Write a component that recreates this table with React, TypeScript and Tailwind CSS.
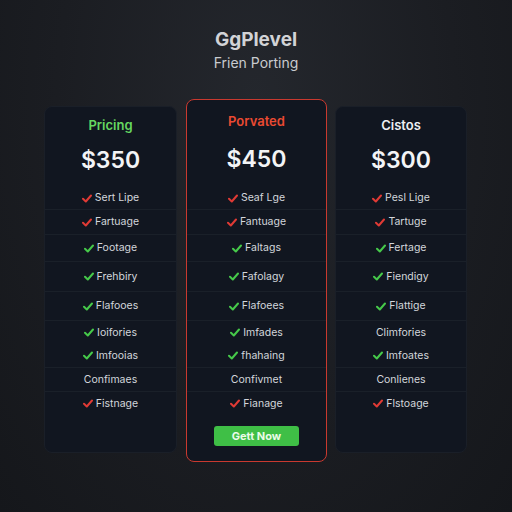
import React from "react";

type Row = { t: string; c: "r" | "g" | "n"; h: number; b: boolean };

const H = [22, 25, 27, 30, 29, 24, 23, 24, 24];
const B = [false, true, true, true, true, true, false, true, true];

const mk = (items: [string, "r" | "g" | "n"][]): Row[] =>
  items.map(([t, c], i) => ({ t, c, h: H[i], b: B[i] }));

const left = mk([
  ["Sert Lipe", "r"],
  ["Fartuage", "r"],
  ["Footage", "g"],
  ["Frehbiry", "g"],
  ["Flafooes", "g"],
  ["Ioifories", "g"],
  ["Imfooias", "g"],
  ["Confimaes", "n"],
  ["Fistnage", "r"],
]);
const mid = mk([
  ["Seaf Lge", "r"],
  ["Fantuage", "r"],
  ["Faltags", "g"],
  ["Fafolagy", "g"],
  ["Flafoees", "g"],
  ["Imfades", "g"],
  ["fhahaing", "g"],
  ["Confivmet", "n"],
  ["Fianage", "r"],
]);
const right = mk([
  ["Pesl Lige", "r"],
  ["Tartuge", "r"],
  ["Fertage", "g"],
  ["Fiendigy", "g"],
  ["Flattige", "g"],
  ["Climfories", "n"],
  ["Imfoates", "g"],
  ["Conlienes", "n"],
  ["Flstoage", "r"],
]);

function Check({ c }: { c: "r" | "g" }) {
  return (
    <svg width="10" height="9" viewBox="0 0 10 9" className="shrink-0">
      <polyline
        points="1,4.8 3.8,7.5 9,1.5"
        fill="none"
        stroke={c === "r" ? "#e03a35" : "#46c94a"}
        strokeWidth="2"
        strokeLinecap="round"
        strokeLinejoin="round"
      />
    </svg>
  );
}

function Rows({ rows, top }: { rows: Row[]; top: string }) {
  return (
    <div className={`flex flex-col ${top}`}>
      {rows.map((r, i) => (
        <div
          key={i}
          style={{ height: r.h }}
          className={`flex items-center justify-center gap-[3px] text-[10.5px] text-[#d3d6dc] ${
            r.b ? "border-t border-[#1a2029]" : ""
          }`}
        >
          {r.c !== "n" && <Check c={r.c} />}
          <span>{r.t}</span>
        </div>
      ))}
    </div>
  );
}

export default function App() {
  return (
    <div
      className="w-[512px] h-[512px] flex flex-col items-center bg-[radial-gradient(ellipse_at_50%_20%,#24272d_0%,#1b1d22_55%,#15171b_100%)]"
      style={{ fontFamily: "Inter, 'Open Sans', sans-serif" }}
    >
      <div className="mt-[29px] text-[19px] leading-[22px] font-bold text-[#d2d3d6]">GgPlevel</div>
      <div className="mt-[2px] text-[14px] leading-[20px] text-[#c9cbcf]">Frien Porting</div>
      <div className="mt-[26px] w-full px-[44px] flex items-start gap-[8px]">
        <div className="mt-[7px] w-[133px] h-[347px] rounded-[8px] bg-[#111620] border border-[#1a1f28] flex flex-col items-stretch">
          <div className="pt-[8px] text-center text-[13px] leading-[20px] font-semibold text-[#66d860]">Pricing</div>
          <div className="mt-[10px] text-center text-[23px] leading-[30px] font-semibold text-[#f3f4f6]">$350</div>
          <Rows rows={left} top="mt-[12px]" />
        </div>
        <div className="ml-[1px] w-[141px] h-[363px] rounded-[8px] bg-[#111620] border-[1.5px] border-[#c9392f] flex flex-col items-stretch">
          <div className="pt-[11px] text-center text-[13px] leading-[20px] font-semibold text-[#ea4a32]">Porvated</div>
          <div className="mt-[13px] text-center text-[23px] leading-[30px] font-semibold text-[#f3f4f6]">$450</div>
          <Rows rows={mid} top="mt-[13px]" />
          <div className="mt-[11px] flex justify-center">
            <div className="w-[85px] h-[20px] rounded-[3px] bg-[#3fbf46] flex items-center justify-center text-[11px] font-bold text-[#eafbe9]">
              Gett Now
            </div>
          </div>
        </div>
        <div className="mt-[7px] w-[132px] h-[347px] rounded-[8px] bg-[#111620] border border-[#1a1f28] flex flex-col items-stretch">
          <div className="pt-[8px] text-center text-[13px] leading-[20px] font-semibold text-[#eef0f3]">Cistos</div>
          <div className="mt-[10px] text-center text-[23px] leading-[30px] font-semibold text-[#f3f4f6]">$300</div>
          <Rows rows={right} top="mt-[12px]" />
        </div>
      </div>
    </div>
  );
}
